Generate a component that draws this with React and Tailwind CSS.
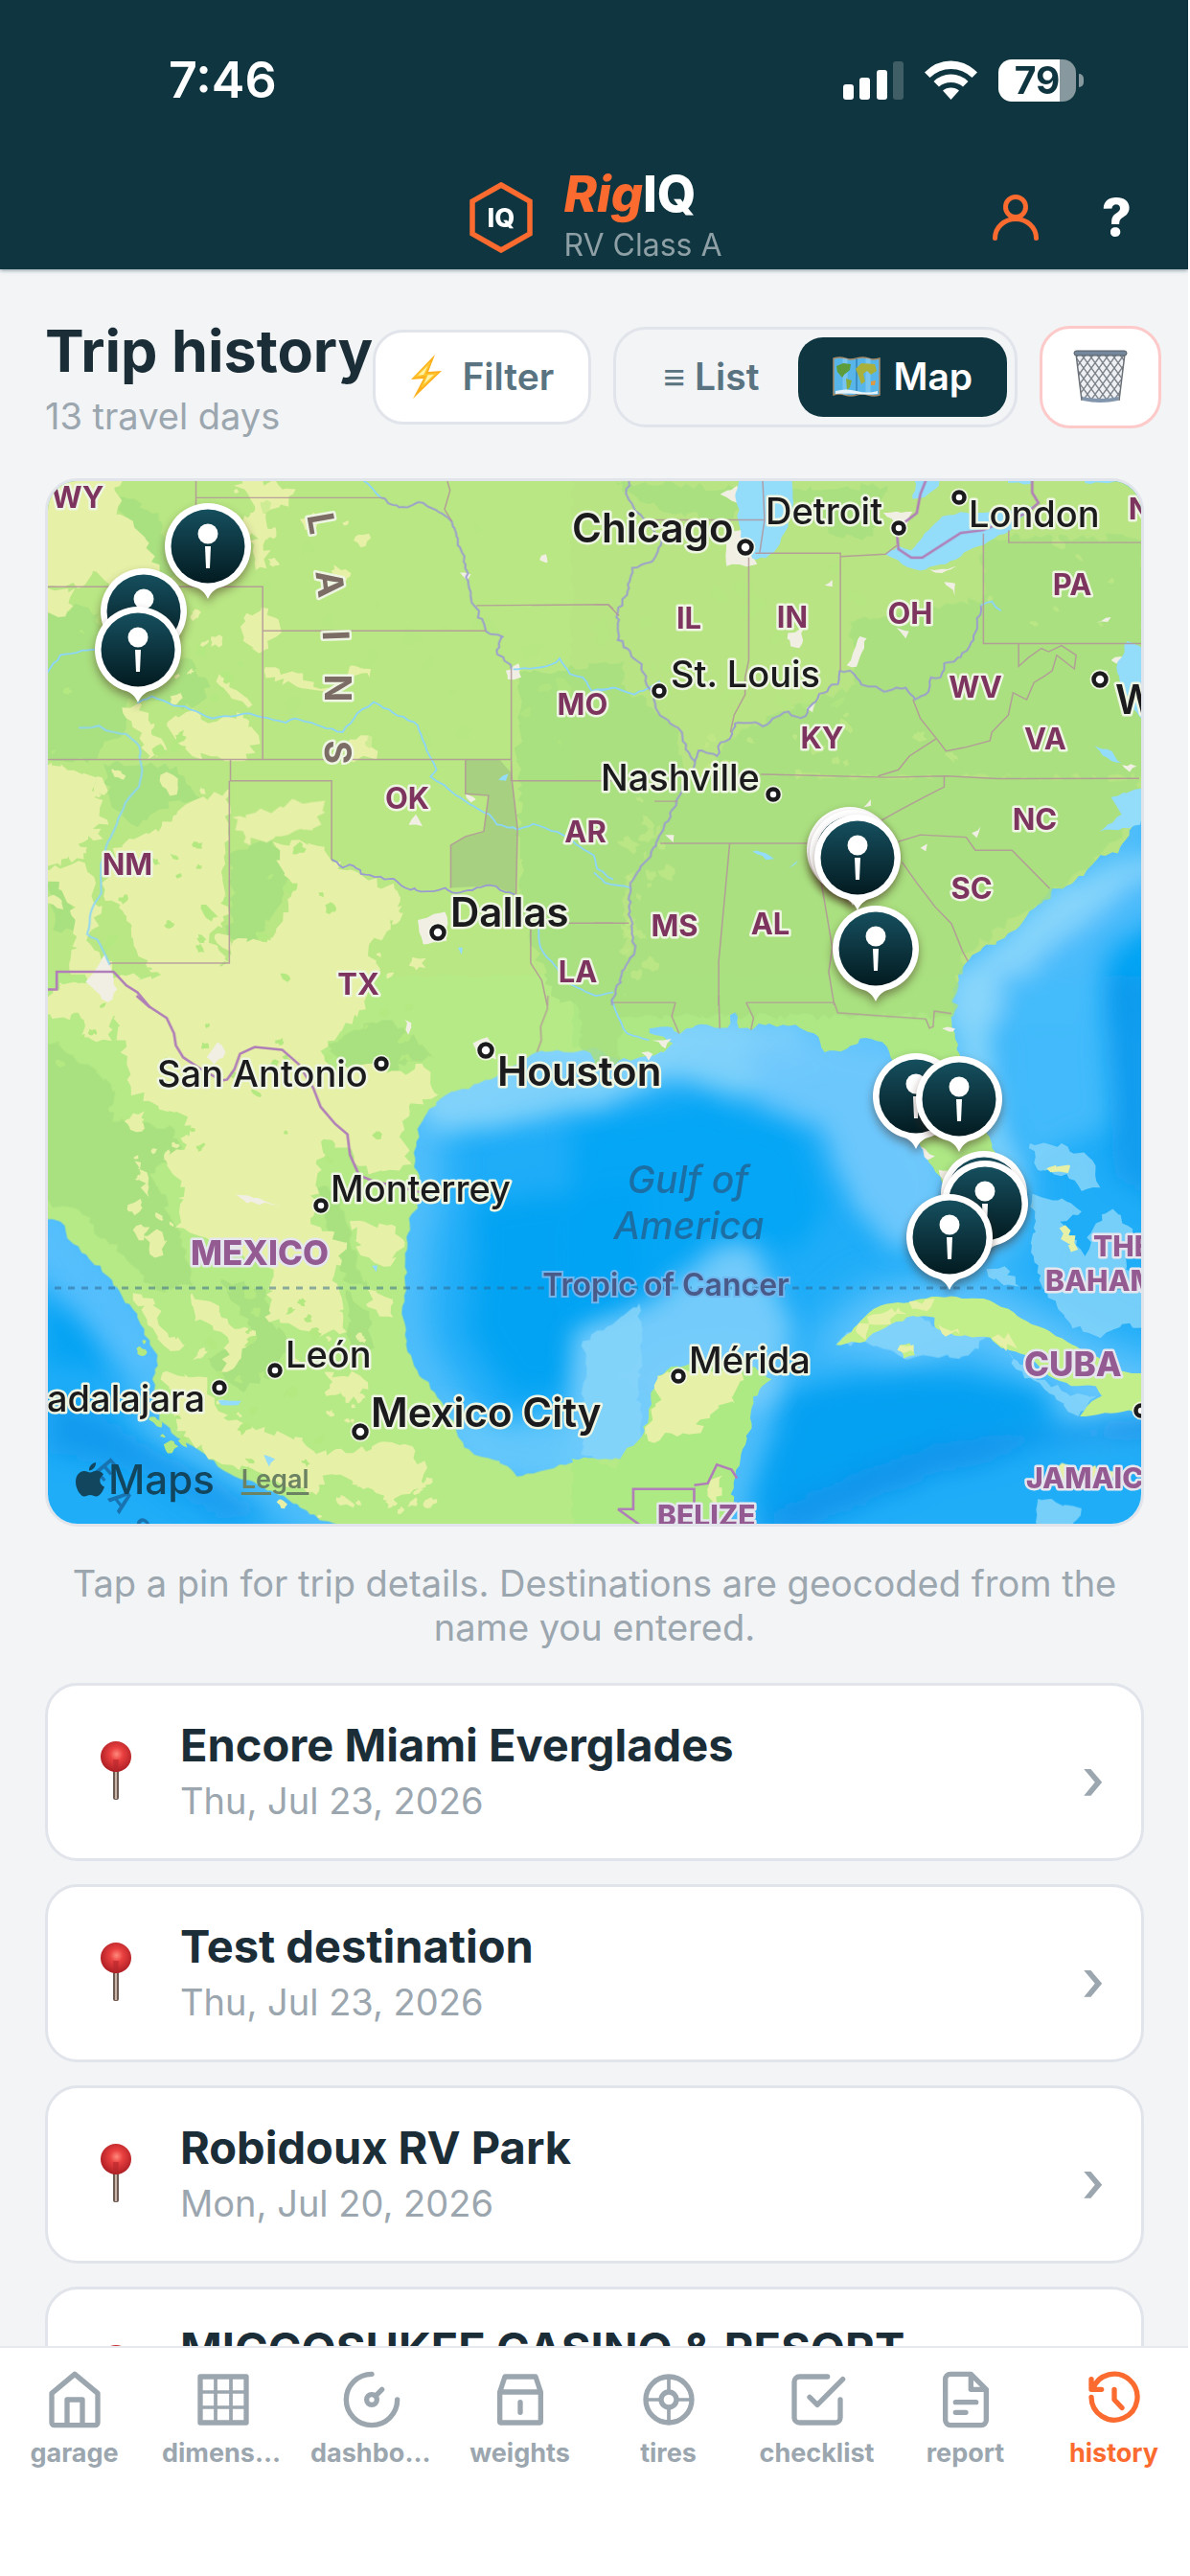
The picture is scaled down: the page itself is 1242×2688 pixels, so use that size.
import { useState } from 'react';
import clsx from 'clsx';

const trips = [
    { id: 1, name: 'Encore Miami Everglades', date: 'Thu, Jul 23, 2026' },
    { id: 2, name: 'Test destination', date: 'Thu, Jul 23, 2026' },
    { id: 3, name: 'Robidoux RV Park', date: 'Mon, Jul 20, 2026' },
    { id: 4, name: 'MICCOSUKEE CASINO & RESORT', date: 'Mon, Jul 20, 2026' },
];

// x / y in map units, see VIEW
const pins = [
    [217, 571], [150, 639], [144, 679],
    [887, 888], [890, 891], [895, 896], [914, 991],
    [956, 1145], [1001, 1148],
    [1027, 1247], [1028, 1257], [991, 1292],
];

const VIEW = { x: 50, y: 503, w: 1141, h: 1088 };

const states = [
    ['WY', 81, 531], ['MO', 608, 747], ['OK', 425, 845], ['NM', 133, 914], ['TX', 374, 1039],
    ['AR', 611, 880], ['LA', 603, 1026], ['PA', 1119, 622], ['IL', 719, 657], ['IN', 827, 656],
    ['OH', 950, 652], ['WV', 1018, 729], ['KY', 858, 782], ['VA', 1091, 783], ['NC', 1080, 867],
    ['SC', 1014, 939], ['MS', 704, 978], ['AL', 804, 976], ['NY', 1201, 543],
];

// name, x, baseline, dot x, dot y
const bigCities = [
    ['Chicago', 597, 567, 778, 572],
    ['Dallas', 470, 968, 457, 974],
    ['Washington', 1164, 746, 1148, 710],
    ['Houston', 519, 1134, 507, 1097],
    ['Mexico City', 387, 1490, 376, 1495],
];

const cities = [
    ['Detroit', 799, 548, 938, 552],
    ['London', 1011, 551, 1001, 520],
    ['St. Louis', 700, 718, 688, 722],
    ['Nashville', 627, 826, 807, 830],
    ['San Antonio', 164, 1135, 398, 1111],
    ['Monterrey', 345, 1255, 335, 1259],
    ['León', 298, 1428, 287, 1431],
    ['adalajara', 49, 1474, 229, 1449],
    ['Mérida', 719, 1434, 708, 1437],
    ['', 0, 0, 1191, 1473],
];

const plains = [
    ['L', 335, 547, 80], ['A', 344, 610, 83], ['I', 350, 664, 88], ['N', 352, 719, 90], ['S', 352, 786, 92],
];

const trench = [['E', 111, 1535, 50], ['A', 126, 1567, 52], ['S', 145, 1596, 54]];

// Each tile keeps its own local coordinates
const TILE = {
    nw: 'translate(40 490) scale(0.38265 0.35714)',
    ne: 'translate(620 490) scale(0.38265 0.35714)',
    sw: 'translate(40 1040) scale(0.38265 0.35714)',
    se: 'translate(620 1040) scale(0.38265 0.35714)',
};

function rng(seed) {
    let s = seed;
    return () => {
        s = (s * 16807) % 2147483647;
        return s / 2147483647;
    };
}

// Breaks every edge into small jittered steps so outlines look natural
function rough(str, amp = 8, closed = true, step = 16) {
    const pts = str.trim().split(/\s+/).map((p) => p.split(',').map(Number));
    const rand = rng(Math.abs(Math.round(pts[0][0] * 31 + pts[0][1] * 17 + pts.length * 101)) + 7);
    const out = [];
    const n = closed ? pts.length : pts.length - 1;
    for (let i = 0; i < n; i++) {
        const [x1, y1] = pts[i];
        const [x2, y2] = pts[(i + 1) % pts.length];
        const len = Math.hypot(x2 - x1, y2 - y1);
        const k = Math.max(1, Math.round(len / step));
        for (let j = 0; j < k; j++) {
            const a = j === 0 ? 0.2 : 1;
            const t = j / k;
            out.push([
                Math.round(x1 + (x2 - x1) * t + (rand() - 0.5) * amp * 2 * a),
                Math.round(y1 + (y2 - y1) * t + (rand() - 0.5) * amp * 2 * a),
            ]);
        }
    }
    if (!closed) out.push(pts[pts.length - 1]);
    return `M${out.map((p) => p.join(' ')).join('L')}${closed ? 'Z' : ''}`;
}

function scatter(seed, [x1, y1, x2, y2], count, size) {
    const rand = rng(seed);
    let d = '';
    for (let i = 0; i < count; i++) {
        const cx = x1 + rand() * (x2 - x1);
        const cy = y1 + rand() * (y2 - y1);
        const r = size * (0.3 + rand());
        const lean = rand() * 1.4 - 0.7;
        const k = 11;
        for (let j = 0; j < k; j++) {
            const a = (j / k) * Math.PI * 2;
            const q = r * (0.45 + rand() * 0.8);
            const px = Math.cos(a) * q;
            const py = Math.sin(a) * q;
            d += `${j ? 'L' : 'M'}${Math.round(cx + px + py * lean)} ${Math.round(cy + py)}`;
        }
        d += 'Z';
    }
    return d;
}

const land = [
    ['nw', '-60,-60 1660,-60 1660,1660 -60,1660', 0],
    ['ne', '-60,-60 1600,-60 1600,700 1560,930 1490,960 1480,1000 1460,1070 1430,1125 1380,1130 1350,1165 1310,1205 1290,1220 1245,1225 1215,1270 1180,1310 1120,1370 1060,1400 1010,1450 985,1510 975,1568 975,1590 -60,1590', 7],
    ['sw', '-40,-60 1640,-60 1640,150 1515,150 1450,165 1360,165 1310,200 1250,235 1200,258 1110,290 1060,345 1040,380 1030,440 1025,500 1045,560 1035,620 1012,650 1005,740 1000,850 995,940 1005,1010 1015,1050 1040,1110 1080,1160 1130,1240 1145,1290 1190,1340 1240,1355 1290,1385 1305,1405 1370,1390 1450,1365 1515,1352 1640,1352 1640,1640 840,1640 820,1546 740,1515 680,1470 600,1430 510,1390 440,1330 380,1290 330,1240 320,1160 310,1120 325,1080 325,1050 290,990 270,930 230,880 190,820 140,770 80,710 60,660 24,652 -40,640', 6],
    ['se', '-60,-60 985,-60 978,0 975,60 985,110 1000,190 1030,290 1070,400 1095,460 1120,540 1130,640 1110,700 1060,720 1010,700 975,640 955,570 945,530 925,500 910,470 890,440 870,290 840,220 810,180 785,135 740,122 690,155 630,165 600,110 550,85 500,90 450,80 430,100 395,95 392,45 370,45 365,95 310,85 250,95 235,110 200,90 150,95 150,110 190,120 215,140 190,165 150,175 100,190 60,180 25,165 0,150 -60,150', 6],
    ['se', '-60,1352 0,1350 20,1370 60,1380 90,1320 130,1290 150,1230 155,1160 175,1110 210,1085 250,1080 400,1060 485,1120 450,1150 435,1190 430,1250 400,1340 380,1420 375,1500 350,1560 350,1640 -60,1640', 6],
    ['se', '660,1020 690,990 720,960 750,925 800,900 860,895 920,880 990,880 1080,890 1130,915 1180,950 1230,975 1290,1010 1340,1040 1400,1075 1450,1100 1540,1105 1540,1210 1440,1215 1325,1228 1345,1200 1385,1170 1370,1140 1300,1140 1240,1110 1190,1060 1150,1040 1110,1030 1080,1000 1000,995 930,970 930,940 870,935 810,960 760,985 740,1010 690,1015', 4],
    ['se', '835,1020 860,1015 875,1050 845,1060', 4],
].map(([tile, pts, amp]) => ({ tile, d: rough(pts, amp) }));

const landFill = ['#b9e784', '#b8e483', '#b6ea86', '#ade885', '#aeea84', '#c3ef8a', '#c3ef8a'];

const shallows = [
    // Texas and Louisiana shelf
    ['se', '-200,100 300,60 560,90 640,200 480,260 430,300 200,230 0,330 -250,380 -420,400 -500,300', '#8bd6fa', 0.85],
    ['se', '420,150 620,120 900,180 960,560 920,730 800,730 700,600 620,380 460,320', '#70c8fc', 0.95],
    // Campeche bank
    ['se', '-60,1400 -60,980 160,900 330,740 430,720 540,960 520,1060 480,1180 300,1250 60,1400', '#7bcefb', 0.9],
    // Atlantic shelf
    ['ne', '1260,1220 1560,1100 1560,1180 1440,1260 1250,1420 1150,1620 960,1620 980,1480 1120,1370', '#8ad6fb', 0.95],
    ['ne', '1480,1190 1560,1200 1560,1300 1400,1400 1330,1620 1100,1620 1200,1440 1380,1290', '#4fbcfb', 0.9],
    ['se', '970,-60 1110,-60 1080,150 1110,380 1170,560 1120,640 1000,200', '#8ad6fb', 0.9],
    ['se', '1110,-60 1380,-60 1400,380 1180,480 1110,300', '#45bafb', 0.95],
];

// Reef banks have a hard edge
const banks = [
    ['se', '1195,580 1290,600 1330,630 1270,660 1340,760 1360,680 1415,625 1470,680 1450,800 1540,880 1540,990 1440,960 1380,1000 1300,960 1240,880 1200,780'],
    ['se', '1190,430 1290,440 1360,480 1380,560 1330,570 1290,520 1210,510'],
    ['se', '1070,800 1120,790 1160,850 1090,830'],
    ['se', '660,1020 720,960 820,950 870,935 960,980 1070,1000 1020,1050 860,1060 790,1030 740,1010'],
    ['se', '1130,1040 1200,1110 1290,1160 1370,1170 1320,1230 1230,1150 1150,1090'],
    ['se', '1210,1470 1260,1480 1330,1500 1290,1560 1210,1550'],
    ['sw', '1485,1010 1640,900 1640,1380 1480,1340 1490,1180'],
];

const coastShoals = [
    ['sw', '-40,640 60,680 200,850 290,1000 320,1060 290,1120 200,1050 110,920 -40,800', '#5dc1fc', 0.8],
    ['sw', '1280,1250 1640,1150 1640,1400 1180,1400 1080,1200', '#6ccbfb', 0.8],
];

const deeps = [
    ['ne', '1440,1390 1560,1300 1560,1620 1360,1620', '#03a4f3', 0.9],
    ['se', '1380,-60 1560,-60 1560,620 1420,520', '#0c98ec', 0.8],
    ['sw', '1200,600 1640,560 1640,880 1500,980 1450,1150 1300,1180 1180,980', '#02a2f2', 0.9],
    ['se', '-60,380 300,300 560,400 640,620 560,740 330,700 150,860 -60,960', '#06a5f4', 0.85],
    ['se', '540,1160 860,1100 1200,1150 1260,1240 960,1300 700,1400 500,1500 420,1500', '#069ef0', 0.85],
    ['se', '700,1400 980,1300 1300,1260 1560,1220 1560,1290 1240,1310 920,1400 560,1560 400,1560', '#0e8fe9', 0.85],
    ['sw', '24,1180 160,1220 320,1330 500,1430 640,1520 500,1530 300,1400 24,1330', '#0d96ec', 0.8],
    ['sw', '24,900 120,950 180,1090 24,1080', '#05a1f2', 0.8],
];

const yellow = [
    ['nw', '-20,-20 225,-20 215,110 260,170 300,220 330,300 330,345 200,340 150,300 120,345 -20,345'],
    ['nw', '230,700 280,690 310,760 350,820 300,850 280,780 240,730'],
    ['nw', '355,740 420,700 480,740 560,720 600,780 570,850 420,840 370,800'],
    ['nw', '535,50 610,34 700,60 680,110 620,130 630,210 540,190 590,120'],
    ['nw', '580,210 625,200 625,290 590,300'],
    ['nw', '570,420 630,410 660,480 600,540 560,490'],
    ['nw', '480,590 520,620 570,670 575,700 520,660'],
    ['nw', '620,580 720,600 790,640 720,640 620,610'],
    ['nw', '850,790 910,785 925,850 850,850'],
    ['nw', '850,580 905,585 905,610 860,605'],
    ['nw', '-20,345 100,350 80,420 -20,425'],
    ['nw', '-20,870 60,870 150,900 170,990 190,1040 120,1090 60,1160 -20,1160'],
    ['nw', '190,1140 250,1080 330,1060 400,980 520,940 520,1040 500,1180 520,1300 470,1360 520,1445 380,1500 300,1460 240,1300 180,1250'],
    ['nw', '20,1170 130,1150 170,1300 130,1380 200,1450 180,1500 90,1480 100,1280'],
    ['nw', '530,1020 640,1000 700,970 780,970 770,1040 700,1060 640,1080 560,1090'],
    ['nw', '640,1090 760,1100 800,1150 900,1200 1000,1240 960,1330 900,1400 930,1480 870,1600 -20,1600 60,1500 330,1480 520,1440 530,1380 640,1370 690,1250'],
    ['sw', '190,-40 900,-40 860,60 770,160 800,210 900,200 1000,230 1050,200 1090,290 1010,320 990,400 1020,500 900,520 860,470 780,420 760,560 740,650 840,720 800,830 840,980 760,1000 620,940 640,800 480,720 370,680 400,560 340,480 420,420 400,350 330,330 250,270 240,200'],
    ['sw', '100,-20 200,-20 200,130 120,120'],
    ['sw', '265,480 300,530 300,590 275,540'],
    ['sw', '290,700 340,690 340,760 300,740'],
    ['sw', '420,870 480,900 520,960 590,980 540,1080 500,1100 520,1010 430,950'],
    ['sw', '780,1100 880,1110 900,1150 840,1190'],
    ['sw', '260,870 320,900 330,960 400,1020 360,1040 300,960'],
    ['sw', '340,1100 440,1110 480,1180 520,1240 700,1290 760,1340 1000,1310 1060,1380 1050,1440 960,1480 900,1440 800,1400 740,1460 620,1400 500,1370 380,1270'],
    ['sw', '850,660 960,670 1000,720 960,790 880,760'],
    ['sw', '900,860 970,900 970,940 900,910'],
    ['se', '175,1110 240,1090 400,1100 390,1150 380,1190 290,1240 290,1280 210,1280 150,1300 140,1260 170,1200'],
    ['se', '715,975 760,930 830,910 850,930 770,960 740,1010'],
    ['se', '860,895 925,885 920,910 870,915'],
    ['se', '940,960 990,975 1000,990 950,985'],
    ['se', '1085,1000 1130,985 1155,1030 1110,1025'],
    ['se', '835,1020 870,1020 870,1040 845,1045'],
    ['se', '1228,515 1240,500 1300,500 1270,512'],
    ['se', '1270,680 1285,670 1320,740 1300,750'],
    ['se', '1240,1385 1300,1375 1420,1390 1400,1425 1280,1420'],
    ['se', '310,1440 350,1400 350,1460 320,1500'],
];

const darkGreen = [
    ['nw', '215,80 260,90 330,150 350,230 380,300 330,330 280,220 230,150'],
    ['nw', '-20,430 120,400 260,520 420,560 470,640 420,700 330,680 240,680 240,760 140,850 -20,850'],
    ['nw', '180,860 380,870 440,960 320,1000 270,1050 200,990'],
    ['nw', '30,1170 80,1200 105,1350 40,1350'],
    ['nw', '250,1240 310,1290 310,1360 270,1370'],
    ['nw', '530,1120 640,1080 700,1180 640,1300 600,1380 520,1380'],
    ['nw', '1310,600 1600,560 1600,1600 1400,1540 1320,1290 1310,1050'],
    ['ne', '-40,640 130,660 230,770 240,860 240,950 160,1100 90,1200 60,1400 30,1600 -40,1600'],
    ['ne', '240,900 1000,900 1490,905 1480,1000 1380,1130 1200,1280 1000,1420 980,1600 60,1600 110,1400 100,1220'],
    ['ne', '700,450 1060,380 1060,200 1500,200 1500,900 300,900 400,760 600,680 720,630'],
    ['ne', '60,40 380,60 420,110 360,150 180,120'],
    ['ne', '540,60 800,50 760,200 640,190 560,140'],
    ['sw', '-20,80 100,180 200,260 200,370 360,380 400,470 300,520 390,690 420,850 320,860 230,760 120,640 -20,580'],
    ['sw', '500,830 620,860 640,960 700,1000 640,1100 560,1160 460,1060 580,970'],
    ['sw', '840,860 900,920 910,1060 850,1010'],
    ['sw', '760,560 820,560 870,800 900,860 840,840 790,690'],
    ['sw', '780,140 940,70 1000,100 1080,180 960,220 850,210'],
    ['se', '1,200 60,200 80,100 40,20 -40,20 -40,150'],
];

const urban = [
    ['nw', '1035,1320 1110,1295 1115,1380 1050,1390'], ['nw', '1010,1040 1030,1010 1048,1045'],
    ['nw', '1275,590 1310,570 1318,610 1280,615'], ['nw', '1150,305 1180,310 1170,325'],
    ['nw', '1367,268 1385,250 1390,275'], ['nw', '1165,950 1195,965 1180,975'],
    ['nw', '130,1500 180,1420 215,1520 190,1560'], ['ne', '362,180 400,180 445,280 362,285'],
    ['ne', '345,75 390,50 390,100'], ['ne', '530,480 572,470 560,525 535,520'], ['ne', '790,130 870,125 850,170 820,160'],
    ['ne', '825,465 860,475 850,495'], ['ne', '690,575 725,490 745,495 715,580'], ['ne', '915,295 990,285 950,305'],
    ['ne', '955,330 985,335 985,370'], ['ne', '630,340 650,325 650,345'], ['ne', '1360,600 1400,590 1400,630 1370,630'],
    ['ne', '580,700 605,680 595,712'], ['ne', '1030,1065 1055,1045 1045,1080'], ['ne', '890,1108 908,1096 905,1118'],
    ['ne', '735,990 755,965 755,985'], ['ne', '195,1070 218,1070 215,1092'], ['ne', '1440,865 1480,870 1460,885'],
    ['ne', '1410,560 1440,550 1425,570'], ['ne', '1370,450 1410,435 1400,448'], ['sw', '1185,140 1225,120 1250,185 1200,180'],
    ['sw', '460,180 490,135 510,165 480,200'], ['sw', '540,580 600,590 660,612 570,605'], ['sw', '1000,70 1018,80 1008,115'],
    ['se', '160,130 210,125 195,155'], ['se', '130,165 160,170 150,190'], ['se', '950,95 985,95 980,105'],
    ['se', '890,440 930,470 910,480'], ['se', '940,510 965,510 955,545'],
];

const lakes = [
    ['ne', '390,-20 545,-20 545,100 530,170 500,230 470,262 430,262 400,200 390,100'],
    ['ne', '795,250 830,225 865,240 900,190 950,140 1000,128 1120,125 1200,108 1120,190 1020,240 960,280 890,298 840,280'],
    ['ne', '880,-20 955,-20 940,50 900,85 870,90'],
    ['ne', '1130,-20 1230,-20 1190,45 1130,40'],
    ['ne', '1330,-20 1430,-20 1420,38 1340,42'],
    ['ne', '1425,580 1455,505 1500,530 1500,740 1470,700 1440,640'],
    ['ne', '1410,960 1500,930 1490,1040 1380,1060 1440,1010'],
    ['ne', '1365,810 1400,820 1440,860 1400,845'],
    ['ne', '415,1115 455,1120 490,1140 470,1142'],
    ['ne', '530,1168 558,1145 550,1155'],
    ['sw', '490,1183 555,1183 545,1196 500,1195'],
    ['sw', '615,1340 645,1355 630,1375'],
    ['sw', '910,790 925,788 922,808'],
    ['nw', '1255,910 1282,890 1275,912'],
    ['nw', '1145,1398 1158,1400 1155,1420'],
];

const rivers = [
    ['nw', '24,597 60,545 150,528 190,540'],
    ['nw', '270,685 310,665 370,693 400,695 475,730 575,715 675,742 700,730 830,770 870,715 915,682 1035,750 1065,835 1085,880 1070,900 1140,955 1200,995 1230,1010 1250,1040 1307,1055 1350,1038 1430,1070 1515,1130 1525,1170 1568,1200'],
    ['nw', '110,757 165,752 185,765 240,775 275,810 283,880 275,930 245,965 215,1035 190,1090 170,1160 172,1240 145,1290 133,1360 160,1375 195,1450'],
    ['nw', '885,34 935,85'],
    ['nw', '1295,585 1340,585 1400,572 1422,555 1450,600 1485,610 1510,650 1568,640'],
    ['nw', '1365,1340 1370,1400 1400,1440 1440,1500 1520,1540 1568,1530'],
    ['ne', '0,650 60,640 110,660 150,640 180,620'],
    ['ne', '0,1180 30,1210 100,1225'],
    ['ne', '1055,400 1085,388 1110,415'],
    ['se', '50,10 65,60 90,110 150,130'],
];

const riverBorders = [
    ['nw', '935,85 985,113 1050,100 1100,130 1128,155 1150,230 1165,280 1175,350 1190,400 1220,474 1265,490 1250,530 1290,585'],
    ['nw', '800,1143 830,1165 860,1160 880,1185 970,1200 1000,1225 1060,1235 1110,1225 1140,1240 1240,1218 1300,1245'],
    ['ne', '95,34 90,80 130,140 185,210 160,270 105,290 95,350 65,420 65,500 130,570 140,620 165,665 175,710 240,770 250,820 275,855 235,950 190,1050 155,1120 100,1210 95,1280 110,1410 75,1480 50,1568'],
    ['ne', '275,855 285,825 335,840 345,800 370,790 385,745 440,740 460,752 530,710 565,730 610,670 640,640 665,630 670,590 705,595 730,630 800,650 850,640 875,675 905,660 920,610 945,610 955,570 1000,550 1035,500 1055,400'],
];

const borders = {
    nw: 'M430 34V120M430 85H935M24 345H612V850M612 474H1220M24 850H1290M1290 585V912H1568M1290 850L1292 912L1307 1050L1303 1245M524 852V912H800V1143M521 912V1445H195M1195 400L1555 397L1568 410M1115 34L1123 64L1108 119L1128 154M1343 1345V1445L1373 1495L1388 1568M1343 1328H1568M1165 850V950L1228 955L1215 1060L1165 1075L1125 1100V1225',
    ne: 'M140 150H465M460 34L465 150L452 245M422 260V560L412 610V660L382 720L372 770M440 247H672V590M672 257L795 250L825 225M1062 190V511H1492M1131 180V216H1492M1158 511V578L1185 552L1220 525L1240 535L1275 517L1315 545L1310 585L1262 545L1250 590L1230 605L1200 625L1180 675L1143 655L1130 720L1085 770L1080 795L1010 815L960 825L935 790L890 730L870 675M932 790L860 840L830 880L775 898M455 893L800 902L960 898L1100 906L1487 905M955 900V930L900 960L830 1000L780 1030M180 1095H600M830 1090L890 1070L1015 1077L1040 1115H1140L1243 1227M370 1095L340 1440V1568M620 1210L650 1400L640 1470L655 1568M840 1150L880 1210L930 1280L975 1330L1005 1410L1020 1440M165 972H228M0 1328H95M50 1560H222M415 1560H655M0 397H38L68 430',
    sw: 'M1390 0L1388 40L1370 90L1372 130L1360 165',
    se: 'M222 20L212 60L232 110M340 0L343 95M415 20L435 65L428 100M655 20L665 50L905 68L915 95L925 90L928 45L975 52',
};

const nationalBorders = {
    nw: 'M24 1522H50V1470H205L240 1510L270 1530L305 1575',
    ne: 'M905 34L890 75L880 130L825 175L830 235L865 260H895L1000 188L1060 180L1180 130L1212 100L1195 70V34',
    sw: 'M268 0L300 30L350 65L370 110L375 145L395 180L440 212L500 248L515 245L535 215L550 170L590 150L665 158L710 200L750 270L770 325L810 375L843 405L850 465L875 525L910 540L1045 575',
    se: 'M65 1500H107V1441H273V1546M273 1430L310 1425L335 1370L375 1385L390 1410M65 1500L125 1546',
};

function Shapes({ items, amp = 9, ...rest }) {
    return (
        <g {...rest}>
            {items.map(([tile, pts, fill, opacity], i) => (
                <path key={i} transform={TILE[tile]} d={rough(pts, amp)} fill={fill} opacity={opacity} />
            ))}
        </g>
    );
}

function Dot({ x, y, r = 5.5 }) {
    return (
        <>
            <circle cx={x} cy={y} r={r + 4} fill="#f4f7ea" opacity="0.9" />
            <circle cx={x} cy={y} r={r} fill="#fff" stroke="#1b1b1d" strokeWidth="4.500" />
        </>
    );
}

function MapCanvas() {
    const halo = { stroke: '#eef5e2', strokeWidth: 5, strokeLinejoin: 'round', paintOrder: 'stroke' };

    return (
        <svg
            className="block h-full w-full font-[Inter,sans-serif]"
            viewBox={`${VIEW.x} ${VIEW.y} ${VIEW.w} ${VIEW.h}`}
            preserveAspectRatio="xMidYMid slice"
            role="img"
            aria-label="Map of trip destinations"
        >
            <defs>
                <filter id="shelf" x="-30%" y="-30%" width="160%" height="160%">
                    <feGaussianBlur stdDeviation="22" />
                </filter>
                <filter id="soft" x="-20%" y="-20%" width="140%" height="140%">
                    <feGaussianBlur stdDeviation="12" />
                </filter>
            </defs>

            {/* Water */}
            <rect x="40" y="490" width="1170" height="1120" fill="#1fadf8" />
            <g filter="url(#shelf)">
                {land.slice(1).map((l, i) => (
                    <path key={i} transform={TILE[l.tile]} d={l.d} fill="none" stroke="#68c6fc" strokeWidth="96" />
                ))}
            </g>
            <Shapes items={deeps} filter="url(#soft)" />
            <Shapes items={[...shallows, ...coastShoals]} filter="url(#soft)" />
            <Shapes items={banks} fill="#86d5fa" opacity="0.85" />

            {/* Land */}
            {land.map((l, i) => (
                <path key={i} transform={TILE[l.tile]} d={l.d} fill={landFill[i]} />
            ))}
            <Shapes items={darkGreen} amp={12} fill="#a8e080" opacity="0.85" />
            <Shapes items={yellow} amp={13} fill="#e6f0a7" />
            <g fill="#e6f0a7">
                <path transform={TILE.nw} d={scatter(11, [540, 60, 900, 320], 10, 22)} />
                <path transform={TILE.nw} d={scatter(23, [30, 860, 520, 1440], 36, 24)} />
                <path transform={TILE.nw} d={scatter(37, [820, 1180, 1050, 1540], 14, 18)} />
                <path transform={TILE.nw} d={scatter(29, [300, 380, 620, 840], 12, 16)} />
                <path transform={TILE.sw} d={scatter(41, [260, 160, 420, 700], 20, 18)} />
                <path transform={TILE.sw} d={scatter(43, [430, 860, 900, 1280], 20, 18)} />
                <path transform={TILE.sw} d={scatter(47, [650, 1340, 1080, 1540], 28, 16)} />
            </g>
            <g fill="#b4e880">
                <path transform={TILE.nw} d={scatter(53, [40, 400, 600, 840], 18, 18)} />
                <path transform={TILE.nw} d={scatter(59, [180, 1080, 880, 1500], 22, 17)} />
                <path transform={TILE.nw} d={scatter(61, [620, 100, 1540, 840], 26, 22)} opacity="0.5" />
                <path transform={TILE.sw} d={scatter(67, [60, 20, 1020, 240], 20, 14)} />
                <path transform={TILE.sw} d={scatter(71, [280, 860, 780, 1400], 30, 16)} />
                <path transform={TILE.sw} d={scatter(73, [420, 260, 980, 480], 6, 14)} />
                <path transform={TILE.ne} d={scatter(79, [20, 280, 780, 720], 26, 24)} opacity="0.5" />
            </g>
            <g fill="#c3e988" opacity="0.7">
                <path transform={TILE.ne} d={scatter(83, [300, 700, 1000, 900], 14, 18)} />
                <path transform={TILE.ne} d={scatter(89, [80, 960, 220, 1500], 18, 20)} />
                <path transform={TILE.ne} d={scatter(97, [1080, 60, 1480, 480], 12, 16)} />
            </g>
            <path
                transform={TILE.nw}
                d="M1165 850H1258L1290 890L1307 1050L1303 1245L1240 1218L1125 1225V1100L1165 1075L1215 1060L1228 955L1165 950Z"
                fill="#92b57d"
                opacity="0.45"
            />
            <Shapes items={urban} amp={5} fill="#f1efe4" />
            <Shapes items={lakes} amp={5} fill="#93dcfa" />

            {/* Rivers and borders */}
            <g fill="none" stroke="#8dd5f6" strokeWidth="5">
                {rivers.map(([tile, pts], i) => (
                    <path key={i} transform={TILE[tile]} d={rough(pts, 3, false)} />
                ))}
            </g>
            <g fill="none" stroke="#9a9bd0" strokeWidth="5">
                {riverBorders.map(([tile, pts], i) => (
                    <path key={i} transform={TILE[tile]} d={rough(pts, 5, false, 12)} />
                ))}
            </g>
            <g fill="none" stroke="#b3949a" strokeWidth="4" opacity="0.85">
                {Object.entries(borders).map(([tile, d]) => (
                    <path key={tile} transform={TILE[tile]} d={d} />
                ))}
            </g>
            <g fill="none" stroke="#b07fb8" strokeWidth="7">
                {Object.entries(nationalBorders).map(([tile, d]) => (
                    <path key={tile} transform={TILE[tile]} d={d} />
                ))}
            </g>
            <path d="M43 1345H1195" stroke="#30658c" strokeWidth="3" strokeDasharray="7 7" opacity="0.5" />

            {/* Labels */}
            <g fontSize="38" fontWeight="700" fill="#7b6c66" textAnchor="middle" {...halo}>
                {plains.map(([c, x, y, rot]) => (
                    <text key={c} transform={`translate(${x} ${y}) rotate(${rot})`} y="13">{c}</text>
                ))}
            </g>
            <g fontSize="30" fontWeight="600" fill="#1873b0" textAnchor="middle">
                {trench.map(([c, x, y, rot]) => (
                    <text key={c} transform={`translate(${x} ${y}) rotate(${rot})`} y="10">{c}</text>
                ))}
            </g>
            <g fontSize="31" fontWeight="700" fill="#7d3560" textAnchor="middle" {...halo}>
                {states.map(([name, x, y]) => (
                    <text key={name} x={x} y={y}>{name}</text>
                ))}
            </g>
            <g fontWeight="800" fill="#945b92" {...halo} stroke="#e6e6ee">
                <text x="199" y="1321" fontSize="35">MEXICO</text>
                <text x="1069" y="1437" fontSize="35">CUBA</text>
                <text x="1141" y="1312" fontSize="30">THE</text>
                <text x="1091" y="1348" fontSize="30">BAHAMAS</text>
                <text x="1071" y="1554" fontSize="30">JAMAICA</text>
                <text x="686" y="1593" fontSize="30">BELIZE</text>
            </g>
            <g fontSize="39" fontStyle="italic" fontWeight="500" fill="#1c6fa5" textAnchor="middle">
                <text x="718" y="1246">Gulf of</text>
                <text x="719" y="1294">America</text>
            </g>
            <text x="695" y="1353" fontSize="32" fontWeight="600" fill="#4a5a88" textAnchor="middle" stroke="#6fb7ee" strokeWidth="4" paintOrder="stroke">
                Tropic of Cancer
            </text>
            {[...bigCities, ...cities].map(([name, , , dx, dy], i) => (
                <Dot key={`${name}${dx}`} x={dx} y={dy} r={i < bigCities.length ? 6.5 : 5.5} />
            ))}
            <g fontSize="42" fontWeight="600" fill="#1b1b1d" {...halo}>
                {bigCities.map(([name, x, y]) => (
                    <text key={name} x={x} y={y}>{name}</text>
                ))}
            </g>
            <g fontSize="38" fontWeight="500" fill="#1b1b1d" {...halo}>
                {cities.filter(([name]) => name).map(([name, x, y]) => (
                    <text key={name} x={x} y={y}>{name}</text>
                ))}
            </g>
        </svg>
    );
}

function PinGlyph() {
    return (
        <svg className="h-[120px] w-[110px]" viewBox="-55 -52 110 120">
            <defs>
                <linearGradient id="pinFill" x1="0" y1="0" x2="0" y2="1">
                    <stop offset="0" stopColor="#164f5e" />
                    <stop offset="1" stopColor="#031b21" />
                </linearGradient>
            </defs>
            <path
                className="drop-shadow-[0_5px_5px_rgba(60,30,20,0.45)]"
                d="M0 55C-4 46-9 44-16 42A45 45 0 1 1 16 42C9 44 4 46 0 55Z"
                fill="#fff"
            />
            <circle r="38.5" fill="url(#pinFill)" />
            <circle cy="-13" r="10.5" fill="#fff" />
            <path d="M-3 0L3 0L2 23H-2Z" fill="#fff" />
        </svg>
    );
}

function PushpinIcon() {
    return (
        <svg className="mb-1 h-[62px] w-[34px] shrink-0" viewBox="0 0 34 62">
            <defs>
                <radialGradient id="pinHead" cx="0.52" cy="0.42" r="0.6">
                    <stop offset="0" stopColor="#ff8a7c" />
                    <stop offset="0.35" stopColor="#ea4040" />
                    <stop offset="1" stopColor="#a81c22" />
                </radialGradient>
            </defs>
            <rect x="14" y="30" width="6" height="32" rx="2" fill="#6d5a52" />
            <rect x="16" y="32" width="2" height="29" fill="#c9b5a8" />
            <circle cx="17" cy="17" r="16" fill="url(#pinHead)" />
            <path d="M14 20H20L19 32H15Z" fill="#b3262c" opacity="0.6" />
        </svg>
    );
}

function BoltIcon() {
    return (
        <svg className="h-[48px] w-[34px]" viewBox="0 0 34 48">
            <path d="M26 1L1 27L14 26L3 47L33 18L19 19Z" fill="#fdb01c" />
            <path d="M21 9L6 24L18 22L12 35L27 21L15 22Z" fill="#fff3a6" stroke="#fdc52f" strokeWidth="1.5" />
        </svg>
    );
}

function MapIcon() {
    return (
        <svg className="h-[42px] w-[50px]" viewBox="0 0 50 42">
            <path d="M1 2Q8 0 13 2T25 2T37 2T49 2V40Q43 42 37 40T25 40T13 40T1 40Z" fill="#57b5ea" stroke="#a58a68" strokeWidth="1.5" />
            <path d="M13 2V40M37 2V40" stroke="#8fd2f5" strokeWidth="5" opacity="0.6" />
            <path d="M25 2V40" stroke="#327fb5" strokeWidth="2" opacity="0.7" />
            <path d="M4 10L11 7L19 8L18 14L12 19L10 22L5 16Z" fill="#5c9c3a" />
            <path d="M14 23L20 25L18 32L15 35Z" fill="#86ad3c" />
            <path d="M24 13L30 7L44 8L46 15L40 19L36 15L32 18L34 26L30 29L27 20Z" fill="#a9b13c" />
            <path d="M40 26L45 25L44 30L40 30Z" fill="#dc9a44" />
            <path d="M3 36Q14 33 25 36T47 36V39Q36 40 25 39T3 39Z" fill="#e6f3fa" />
        </svg>
    );
}

function TrashIcon() {
    return (
        <svg className="h-[56px] w-[57px]" viewBox="0 0 57 56">
            <defs>
                <clipPath id="basket"><path d="M3 5H54L48 52Q28 57 9 52Z" /></clipPath>
            </defs>
            <path d="M3 5H54L48 52Q28 57 9 52Z" fill="#eef0f3" />
            <g clipPath="url(#basket)" stroke="#7d838b" strokeWidth="1.4">
                {[-48, -40, -32, -24, -16, -8, 0, 8, 16, 24, 32, 40, 48, 56].map((x) => (
                    <path key={x} d={`M${x} 4L${x + 38} 56M${x + 38} 4L${x} 56`} />
                ))}
            </g>
            <path d="M9 49Q28 53 48 49L47 53Q28 57 10 53Z" fill="#8195ad" />
            <path d="M3 4L9 53M54 4L48 53" stroke="#6b7178" strokeWidth="1.5" />
            <rect x="1" y="1" width="55" height="5" rx="2.5" fill="#74879b" stroke="#535c66" />
        </svg>
    );
}

function StatusBar() {
    return (
        <div className="flex h-[168px] items-center justify-between pl-[176px] pr-[109px] text-white">
            <span className="text-[52px] font-semibold leading-[60px]">7:46</span>
            <div className="flex items-center gap-[22px]">
                <svg className="h-[42px] w-[63px]" viewBox="0 0 63 42">
                    <g fill="#fff">
                        <rect y="25" width="11" height="16" rx="3" />
                        <rect x="17" y="18" width="11" height="23" rx="3" />
                        <rect x="35" y="10" width="11" height="31" rx="3" />
                        <rect x="52" y="1" width="11" height="40" rx="3" opacity="0.2" />
                    </g>
                </svg>
                <svg className="h-[42px] w-[55px]" viewBox="0 0 55 42">
                    <g fill="#fff">
                        <path d="M0 12.500Q12 .5 27.500 .5T55 12.500L49.500 18Q40 9 27.500 9T5.500 18Z" />
                        <path d="M9.500 22Q17 14.500 27.500 14.500T45.500 22L40 27.500Q35 23 27.500 23T15 27.500Z" />
                        <path d="M19 31.500Q22.500 28.500 27.500 28.500T36 31.500L27.500 41Z" />
                    </g>
                </svg>
                <div className="flex items-center gap-[3px]">
                    <div className="flex h-[44px] w-[81px] items-center justify-center rounded-[14px] bg-[linear-gradient(to_right,#fff_79%,#87999f_79%)] text-[39px] font-bold leading-[44px] text-[#0f3640]">
                        79
                    </div>
                    <div className="h-[14px] w-[5px] rounded-r-full bg-[#87999f]" />
                </div>
            </div>
        </div>
    );
}

function AppHeader() {
    return (
        <header className="relative z-10 shrink-0 bg-[#0f3640] shadow-[0_1px_4px_rgba(15,54,64,0.5)]">
            <StatusBar />
            <div className="grid h-[113px] grid-cols-[1fr_auto_1fr] items-center pt-[4px]">
                <div />
                <div className="ml-[4px] flex items-center gap-[32px]">
                    <svg className="h-[74px] w-[66px]" viewBox="0 0 66 74">
                        <path d="M33 3L63 20V54L33 71L3 54V20Z" fill="none" stroke="#fb6b2f" strokeWidth="5.500" />
                        <text x="33" y="47" textAnchor="middle" fontSize="27" fontWeight="800" fill="#fff">IQ</text>
                    </svg>
                    <div>
                        <div className="text-[52px] font-extrabold leading-[58px] text-white">
                            <em className="text-[#fb6b2f]">Rig</em>IQ
                        </div>
                        <div className="text-[32px] leading-[48px] text-[#8e9fa5]">RV Class A</div>
                    </div>
                </div>
                <div className="flex items-center justify-end gap-[66px] pr-[59px]">
                    <button type="button" aria-label="Account">
                        <svg className="block h-[48px] w-[48px]" viewBox="0 0 48 48" fill="none" stroke="#fb6b2f" strokeWidth="5" strokeLinecap="round">
                            <circle cx="24" cy="13" r="10.500" />
                            <path d="M2.500 45.500a21.500 20 0 0 1 43 0" />
                        </svg>
                    </button>
                    <button type="button" className="text-[54px] font-extrabold leading-[60px] text-white">?</button>
                </div>
            </div>
        </header>
    );
}

function TripMap() {
    return (
        <div className="relative mt-[35px] aspect-[1147/1094] w-full overflow-hidden rounded-[34px] border-[3px] border-[#e1e4ea]">
            <MapCanvas />
            {pins.map(([x, y], i) => (
                <button
                    key={i}
                    type="button"
                    aria-label="Trip pin"
                    className="absolute -ml-[55px] -mt-[52px]"
                    style={{
                        left: `${((x - VIEW.x) / VIEW.w) * 100}%`,
                        top: `${((y - VIEW.y) / VIEW.h) * 100}%`,
                    }}
                >
                    <PinGlyph />
                </button>
            ))}
            <div className="absolute bottom-[20px] left-[29px] flex items-center gap-[28px]">
                <div className="flex items-center gap-1 text-[42px] font-medium leading-[52px] text-[#12455e]">
                    <svg className="h-[36px] w-[30px]" viewBox="0 0 30 36" fill="currentColor">
                        <path d="M21 0C21.500 4 18 8.500 14 8.500C13.500 4.500 17 .8 21 0ZM15 10.500C17 10.500 19 8.800 22 8.800C25 8.800 27.500 10.300 29 12.500C23.500 16 24.500 23.500 30 25.500C28.500 30 25 35.500 21.500 35.500C19 35.500 18 34 15.200 34C12.300 34 11.200 35.500 9 35.500C5 35.500 0 27.500 0 20.500C0 13 4.500 9 8.800 9C11.500 9 13.500 10.500 15 10.500Z" />
                    </svg>
                    Maps
                </div>
                <a href="#legal" className="text-[27px] font-semibold leading-[32px] text-[#6b8263] underline decoration-[3px] underline-offset-4">
                    Legal
                </a>
            </div>
        </div>
    );
}

function TripCard({ trip }) {
    return (
        <li>
            <button
                type="button"
                className="flex w-full items-center rounded-[34px] border-[3px] border-[#e1e4ea] bg-white py-[32px] pl-[54px] pr-[38px] text-left"
            >
                <PushpinIcon />
                <div className="ml-[50px] min-w-0 flex-1">
                    <div className="truncate text-[47px] font-bold leading-[60px] text-[#1b2d37]">{trip.name}</div>
                    <div className="text-[38px] leading-[56px] text-[#9ba6af]">{trip.date}</div>
                </div>
                <span className="pt-[14px] text-[60px] font-medium leading-[60px] text-[#9ba6af]">›</span>
            </button>
        </li>
    );
}

const navItems = [
    {
        label: 'garage',
        icon: <path d="M3 9.500L12 2l9 7.500V21a1 1 0 0 1-1 1H4a1 1 0 0 1-1-1zM9 22V12h6v10" />,
    },
    {
        label: 'dimensions',
        icon: (
            <>
                <path d="M3 3h18v18H3z" />
                <path strokeWidth="1.4" d="M9 3v18M15 3v18M3 9h18M3 15h18" />
            </>
        ),
    },
    {
        label: 'dashboard',
        icon: <path d="M12 2a10 10 0 1 0 10 10M13.400 10.600L16 8M14 12a2 2 0 1 1-4 0a2 2 0 0 1 4 0z" />,
    },
    {
        label: 'weights',
        icon: <path d="M6 3h12l2 6v11.500a.5.5 0 0 1-.5.5h-15a.5.5 0 0 1-.5-.5V9zM4 9h16M12 13v4" />,
    },
    {
        label: 'tires',
        icon: (
            <>
                <circle cx="12" cy="12" r="9" />
                <circle cx="12" cy="12" r="3" />
                <path strokeWidth="1.4" d="M12 3v6M12 15v6M3 12h6M15 12h6" />
            </>
        ),
    },
    {
        label: 'checklist',
        icon: <path d="M9 11l3 3L22 4M21 12v7a2 2 0 0 1-2 2H5a2 2 0 0 1-2-2V5a2 2 0 0 1 2-2h11" />,
    },
    {
        label: 'report',
        icon: <path d="M14 2H6a2 2 0 0 0-2 2v16a2 2 0 0 0 2 2h12a2 2 0 0 0 2-2V8zM14 2v6h6M8 13h8M8 17h4" />,
    },
    {
        label: 'history',
        icon: <path d="M3 4v4h4M3 11a9 9 0 1 0 .5-3M12 8v4l3 3.200" />,
    },
];

function BottomNav() {
    return (
        <nav className="grid h-[240px] shrink-0 grid-cols-8 items-start border-t-2 border-[#e6e9ed] bg-white pt-[22px]">
            {navItems.map((item) => (
                <a
                    key={item.label}
                    href={`#${item.label}`}
                    className={clsx(
                        'flex min-w-0 flex-col items-center gap-[6px] px-[14px]',
                        item.label === 'history' ? 'text-[#fb6b2f]' : 'text-[#9ba6af]'
                    )}
                >
                    <svg
                        className="h-[64px] w-[64px]"
                        viewBox="0 0 24 24"
                        fill="none"
                        stroke="currentColor"
                        strokeWidth="2"
                        strokeLinecap="round"
                        strokeLinejoin="round"
                    >
                        {item.icon}
                    </svg>
                    <span className="max-w-full truncate text-[27px] font-bold leading-[36px]">{item.label}</span>
                </a>
            ))}
        </nav>
    );
}

export default function App() {
    const [view, setView] = useState('map');

    return (
        <div className="bg-white pr-[2px]">
            <div className="flex h-screen flex-col overflow-hidden bg-[#f2f4f6] font-[Inter,sans-serif]">
                <AppHeader />

                <main className="min-h-0 flex-1 overflow-y-auto pl-[47px] pr-[46px] pt-[47px] [scrollbar-width:none]">
                    {/* Title and view controls */}
                    <div className="-mr-[17px] flex items-center justify-between whitespace-nowrap">
                        <div>
                            <h1 className="text-[61px] font-bold leading-[76px] text-[#1b2d37]">Trip history</h1>
                            <p className="text-[38px] leading-[60px] text-[#9ba6af]">13 travel days</p>
                        </div>
                        <div className="flex items-center gap-[23px] pb-[6px] text-[39px] font-semibold leading-[48px]">
                            <button
                                type="button"
                                className="flex h-[99px] w-[228px] items-center justify-center gap-[20px] rounded-[32px] border-[3px] border-[#e1e4ea] bg-white text-[#5a7381]"
                            >
                                <BoltIcon />
                                Filter
                            </button>
                            <div className="flex h-[105px] w-[422px] rounded-[34px] border-[3px] border-[#e1e4ea] p-[8px]">
                                <button
                                    type="button"
                                    onClick={() => setView('list')}
                                    className="flex flex-1 items-center justify-center gap-[10px] rounded-[26px] text-[#5a7381]"
                                >
                                    <span className="font-black">≡</span>
                                    List
                                </button>
                                <button
                                    type="button"
                                    onClick={() => setView('map')}
                                    aria-pressed={view === 'map'}
                                    className="flex w-[218px] items-center justify-center gap-[13px] rounded-[26px] bg-[#0f3640] text-white"
                                >
                                    <MapIcon />
                                    Map
                                </button>
                            </div>
                            <button
                                type="button"
                                aria-label="Delete"
                                className="flex h-[107px] w-[127px] items-center justify-center rounded-[32px] border-[3px] border-[#fdc9c9] bg-white"
                            >
                                <TrashIcon />
                            </button>
                        </div>
                    </div>

                    <TripMap />

                    <p className="mt-[36px] text-center text-[38px] leading-[46px] text-[#9ba6af]">
                        Tap a pin for trip details. Destinations are geocoded from the name you entered.
                    </p>

                    <ul className="mt-[35px] flex flex-col gap-[24px]">
                        {trips.map((trip) => (
                            <TripCard key={trip.id} trip={trip} />
                        ))}
                    </ul>
                </main>

                <BottomNav />
            </div>
        </div>
    );
}
